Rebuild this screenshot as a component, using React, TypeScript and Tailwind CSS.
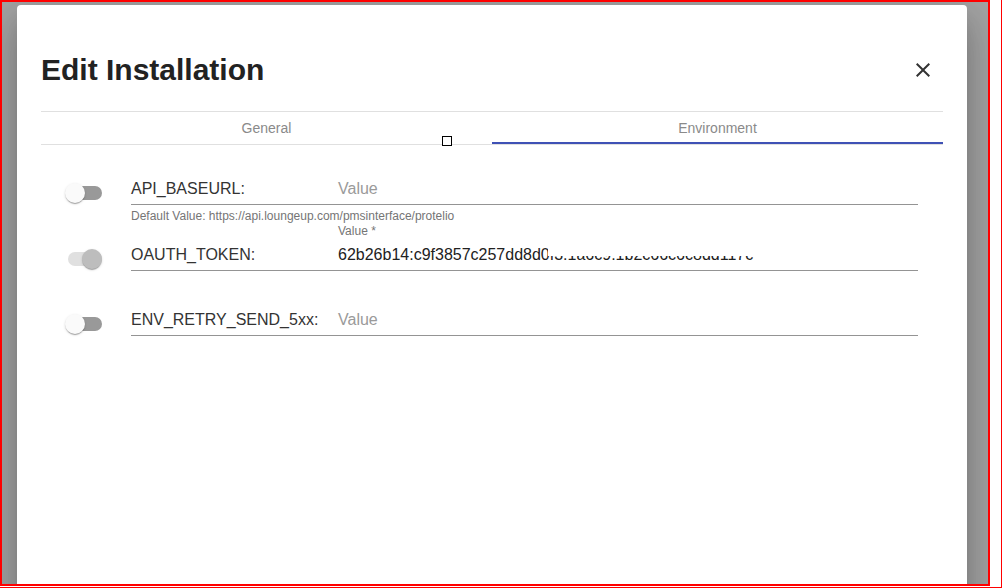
import React from 'react';

interface EnvRowProps {
  name: string;
  value?: string;
  label?: string;
  helper?: string;
  checked?: boolean;
  disabled?: boolean;
  clipped?: boolean;
  className?: string;
}

const Toggle: React.FC<{ checked?: boolean; disabled?: boolean }> = ({ checked = false, disabled = false }) => (
  <div className="relative ml-6 h-5 w-[37px]">
    <div
      className={
        'absolute left-[3px] top-[3px] h-[14px] w-[34px] rounded-full ' +
        (disabled ? 'bg-[#e0e0e0]' : 'bg-[#999999]')
      }
    />
    <div
      className={
        'absolute top-0 size-5 rounded-full shadow-[0_2px_1px_-1px_rgba(0,0,0,0.2),0_1px_1px_0_rgba(0,0,0,0.14),0_1px_3px_0_rgba(0,0,0,0.12)] ' +
        (checked ? 'right-0 ' : 'left-0 ') +
        (disabled ? 'bg-[#bdbdbd]' : 'bg-[#fafafa]')
      }
    />
  </div>
);

const EnvRow: React.FC<EnvRowProps> = ({ name, value, label, helper, checked, disabled, clipped, className }) => (
  <div className={'flex flex-col ' + (className ?? '')}>
    <div className="h-[14px] pl-[297px] text-xs leading-[14px] text-[#757575]">{label}</div>
    <div className="flex">
      <div className="flex w-[90px] items-center pt-[8px]">
        <Toggle checked={checked} disabled={disabled} />
      </div>
      <div className="relative mr-[25px] flex h-[33px] flex-1 items-center border-b border-[#949494] pt-[2px] text-base">
        <span className="w-[207px] text-[#333]">{name}</span>
        {value ? (
          <span className="text-[#212121]">{value}</span>
        ) : (
          <span className="text-[#9a9a9a]">Value</span>
        )}
        {/* le haut du texte est masqué dans la capture */}
        {clipped && <div className="absolute left-[417px] top-0 h-[18px] w-[215px] bg-white" />}
      </div>
    </div>
    {helper && <div className="mt-[3px] pl-[90px] text-xs leading-4 text-[#757575]">{helper}</div>}
  </div>
);

export default function App() {
  return (
    <div className="h-[588px] w-[1003px] bg-white font-['Liberation_Sans',Arial,sans-serif]">
      <div className="h-[588px] w-[1002px] border-b border-r border-[#ff0000]">
        <div className="h-[586px] w-[990px] overflow-hidden border-2 border-[#ff0000] bg-[#a4a4a4] pl-[15px] pt-[3px]">
          <div className="h-[620px] w-[950px] rounded-[4px] bg-white px-6 pt-[47px] shadow-[0_11px_15px_-7px_rgba(0,0,0,0.2),0_24px_38px_3px_rgba(0,0,0,0.14),0_9px_46px_8px_rgba(0,0,0,0.12)]">
            <div className="flex h-9 items-center justify-between">
              <h2 className="text-[30px] font-bold leading-9 text-[#222]">Edit Installation</h2>
              <button className="mr-2 size-6 text-[#333]">
                <svg viewBox="0 0 24 24" className="size-6" fill="currentColor">
                  <path d="M19 6.41L17.59 5 12 10.59 6.41 5 5 6.41 10.59 12 5 17.59 6.41 19 12 13.41 17.59 19 19 17.59 13.41 12z" />
                </svg>
              </button>
            </div>

            <div className="mt-[23px] border-t border-[#e0e0e0]">
              <div className="relative flex h-[33px] border-b border-[#e0e0e0] text-sm leading-[32px] text-[#8a8a8a]">
                <div className="flex-1 text-center">General</div>
                <div className="relative flex-1 text-center">
                  Environment
                  <div className="absolute bottom-0 left-0 h-[2px] w-full bg-[#3f51b5]" />
                </div>
                <div className="absolute left-[401px] top-[24px] size-[10px] border border-black bg-white" />
              </div>
            </div>

            <div className="pt-[13px]">
              <EnvRow
                name="API_BASEURL:"
                helper="Default Value: https://api.loungeup.com/pmsinterface/protelio"
              />
              <EnvRow
                name="OAUTH_TOKEN:"
                label="Value *"
                value="62b26b14:c9f3857c257dd8d0f3:1a6c9:1b2c66c6c8dd117c"
                checked
                disabled
                clipped
                className="mb-[18px]"
              />
              <EnvRow name="ENV_RETRY_SEND_5xx:" />
            </div>
          </div>
        </div>
      </div>
    </div>
  );
}
